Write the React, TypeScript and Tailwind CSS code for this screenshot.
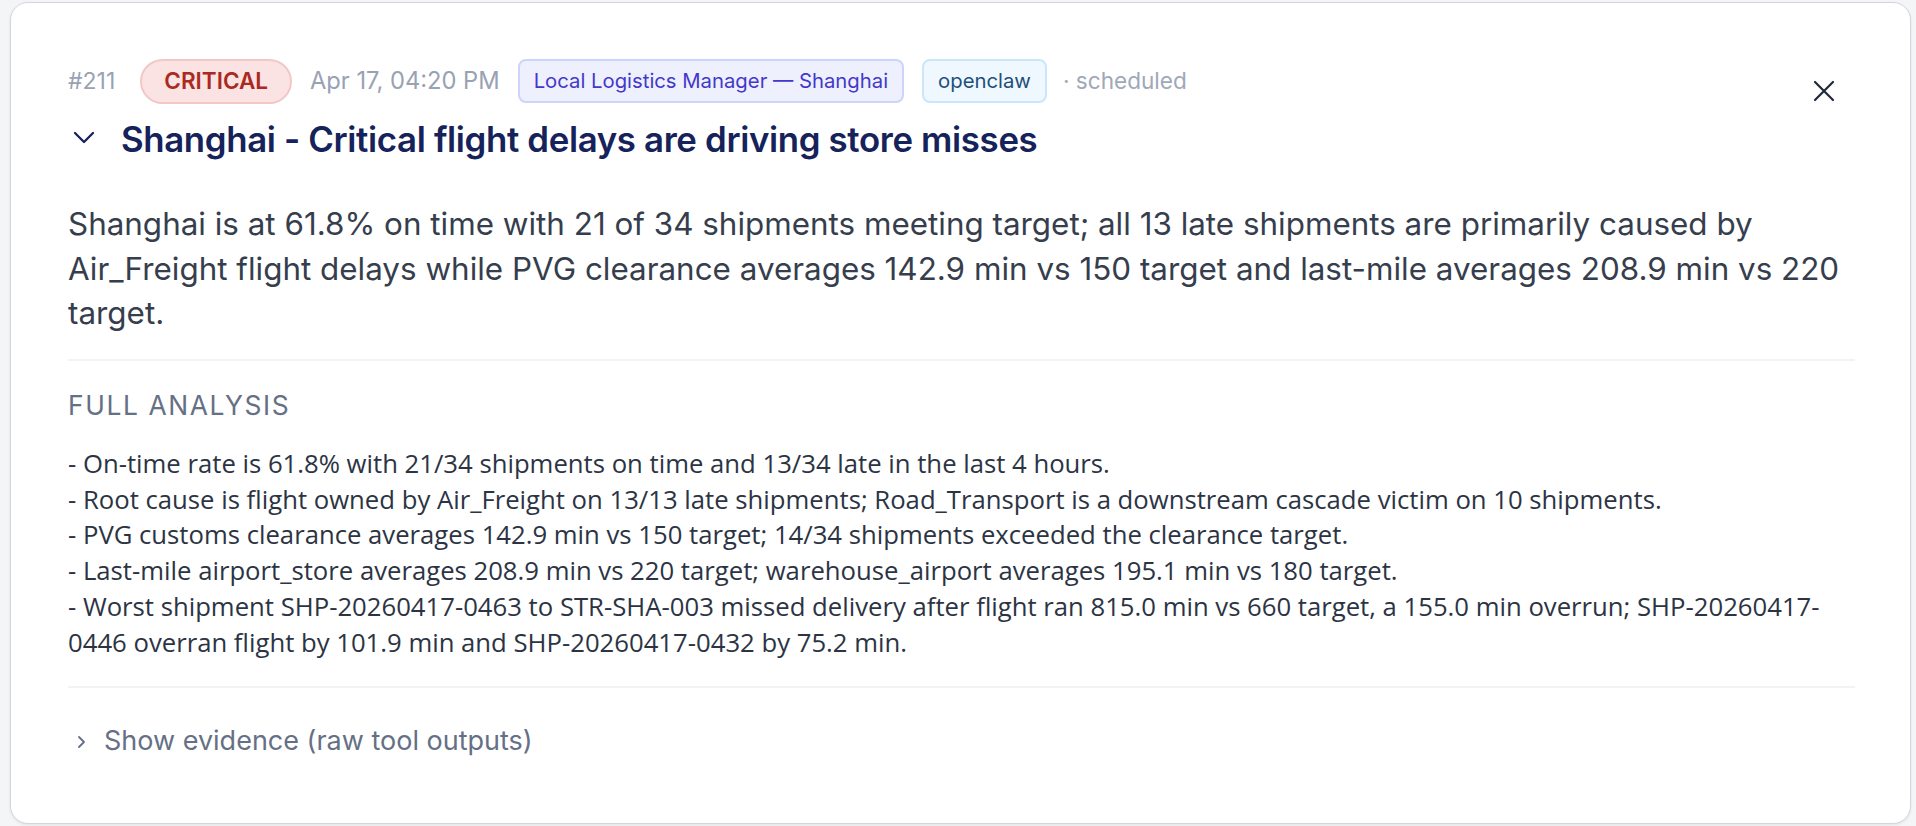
import React from "react";

const inter = { fontFamily: "Inter, 'Noto Sans', sans-serif" };

export default function App() {
  return (
    <div className="w-[1916px] h-[826px] bg-[#f4f5f7] pl-[10px] pt-[2px] overflow-hidden" style={inter}>
      <div className="w-[1901px] h-[822px] bg-white border border-[#d4d6dd] rounded-[18px] shadow-[0_1px_3px_rgba(0,0,0,0.08)] pl-[57px] pr-[55px] pt-[55px] relative">
        <button className="absolute right-[75px] top-[77px] text-[#1f2937]">
          <svg width="22" height="22" viewBox="0 0 22 22" fill="none" stroke="currentColor" strokeWidth="2.2" strokeLinecap="round">
            <path d="M2 2L20 20M20 2L2 20" />
          </svg>
        </button>
        <div className="flex items-center h-[46px] text-[23px]">
          <span className="text-[#98a2b3]">#211</span>
          <span className="ml-[25px] h-[45px] px-[22px] flex items-center rounded-full bg-[#fbe3e3] border-2 border-[#f4c7c7] text-[#a92a20] text-[22.5px] font-semibold">CRITICAL</span>
          <span className="ml-[18px] text-[#98a2b3] text-[23.7px]">Apr 17, 04:20 PM</span>
          <span className="ml-[18px] h-[44px] px-[14px] flex items-center rounded-[8px] bg-[#eef0fe] border-2 border-[#cdd3fb] text-[#4338ca] text-[20.3px]">Local Logistics Manager — Shanghai</span>
          <span className="ml-[18px] h-[44px] px-[14px] flex items-center rounded-[8px] bg-[#f0f8ff] border-2 border-[#c9e6fb] text-[#1e4f7a] text-[20.3px]">openclaw</span>
          <span className="ml-[16px] text-[#a0a8b8] text-[22.6px]">· scheduled</span>
        </div>
        <div className="flex items-center mt-[8px] h-[54px]">
          <svg width="22" height="14" viewBox="0 0 22 14" fill="none" stroke="#16225a" strokeWidth="2.3" strokeLinecap="round" strokeLinejoin="round" className="ml-[5px] -mt-[3px]">
            <path d="M2 2l9 9 9-9" />
          </svg>
          <h1 className="ml-[26px] text-[34.8px] font-semibold text-[#16225a] tracking-[-0.01em]">
            Shanghai - Critical flight delays are driving store misses
          </h1>
        </div>
        <p className="mt-[36px] text-[31.4px] leading-[44.6px] text-[#363e4e]">
          Shanghai is at 61.8% on time with 21 of 34 shipments meeting target; all 13 late shipments are primarily caused by
          <br />
          Air_Freight flight delays while PVG clearance averages 142.9 min vs 150 target and last-mile averages 208.9 min vs 220
          <br />
          target.
        </p>
        <div className="mt-[23px] border-t-2 border-[#f1f3f6]" />
        <div className="mt-[26px] text-[26.4px] leading-[36px] tracking-[0.06em] text-[#667085]">FULL ANALYSIS</div>
        <div className="mt-[23px] text-[25.7px] leading-[35.8px] text-[#2c3444] whitespace-pre-wrap" style={{ fontFamily: "'Open Sans', 'Noto Sans', sans-serif" }}>
{`- On-time rate is 61.8% with 21/34 shipments on time and 13/34 late in the last 4 hours.
- Root cause is flight owned by Air_Freight on 13/13 late shipments; Road_Transport is a downstream cascade victim on 10 shipments.
- PVG customs clearance averages 142.9 min vs 150 target; 14/34 shipments exceeded the clearance target.
- Last-mile airport_store averages 208.9 min vs 220 target; warehouse_airport averages 195.1 min vs 180 target.
- Worst shipment SHP-20260417-0463 to STR-SHA-003 missed delivery after flight ran 815.0 min vs 660 target, a 155.0 min overrun; SHP-20260417-
0446 overran flight by 101.9 min and SHP-20260417-0432 by 75.2 min.`}
        </div>
        <div className="mt-[25px] border-t-2 border-[#f1f3f6]" />
        <div className="mt-[36px] flex items-center h-[36px] text-[27px] text-[#667085]">
          <svg width="10" height="14" viewBox="0 0 10 14" fill="none" stroke="#667085" strokeWidth="1.8" strokeLinecap="round" strokeLinejoin="round" className="ml-[8px]">
            <path d="M3 2l5 5-5 5" />
          </svg>
          <span className="ml-[18px]">Show evidence (raw tool outputs)</span>
        </div>
      </div>
    </div>
  );
}
